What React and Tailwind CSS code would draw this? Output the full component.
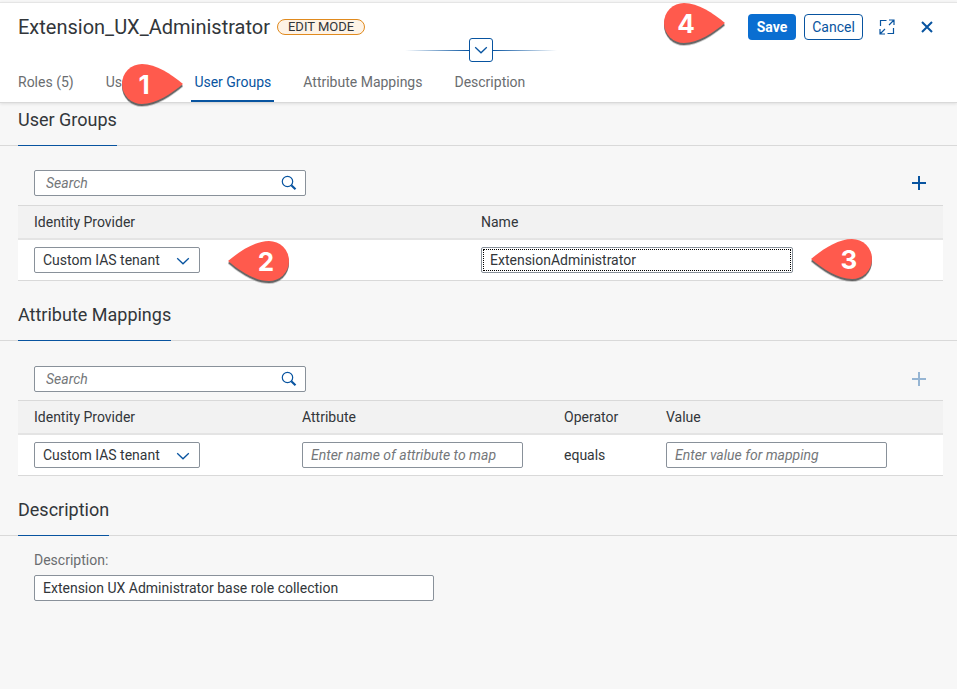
import React from "react";

const fieldBox =
  "h-[26px] rounded-[2px] border border-[#89919a] bg-white px-2 text-sm text-[#32363a] outline-none placeholder:italic placeholder:text-[#74777a]";
const headCell = "border-t border-b-2 border-t-[#d9d9d9] border-b-[#e4e4e4] bg-[#f2f2f2] px-2 text-left text-sm font-normal";
const bodyCell = "border-b border-[#d9d9d9] bg-white px-2";

function Chevron({ className }) {
  return (
    <svg className={className} width="14" height="8" viewBox="0 0 14 8" fill="none" stroke="#0854a0" strokeWidth="1.3" aria-hidden="true">
      <path d="M1.2 1.2 7 6.800 12.800 1.2" />
    </svg>
  );
}

function Pin({ number, flip, className }) {
  const body = flip
    ? "M0 21C12 11 27 1 41 1A20 20 0 0 1 41 41C27 41 12 31 0 21Z"
    : "M62 21C50 11 35 1 21 1A20 20 0 0 0 21 41C35 41 50 31 62 21Z";
  return (
    <svg className={`pointer-events-none absolute ${className}`} width="64" height="46" viewBox="0 0 64 46" aria-hidden="true">
      <path d={body} fill="#555" opacity="0.3" transform="translate(0 3)" />
      <path d={body} fill="#555" opacity="0.85" transform="translate(0 2)" />
      <path d={body} fill="#ff5a4d" />
      <text x={flip ? 38 : 23} y="31" textAnchor="middle" fill="#fff" fontSize="26" fontWeight="700" fontFamily="Inter, 'Liberation Sans', sans-serif">
        {number}
      </text>
    </svg>
  );
}

function SectionTitle({ children, first }) {
  return (
    <div className={`flex border-b border-[#d9d9d9] pl-[18px] ${first ? "pt-[5px]" : "pt-[22px]"}`}>
      <h2 className="-mb-px border-b border-[#0854a0] pb-[13px] text-lg leading-6">{children}</h2>
    </div>
  );
}

function Toolbar({ label, disabled, className }) {
  return (
    <div className={`flex items-center justify-between pr-4 pl-[34px] ${className}`}>
      <div className="flex h-[26px] w-[272px] items-center rounded-[2px] border border-[#89919a] bg-white">
        <input
          type="search"
          aria-label={label}
          placeholder="Search"
          className="min-w-0 flex-1 bg-transparent pl-[11px] text-sm outline-none placeholder:text-[#74777a] placeholder:italic"
        />
        <button type="button" aria-label="Search" className="flex h-6 w-8 items-center justify-center">
          <svg width="16" height="16" viewBox="0 0 16 16" fill="none" stroke="#0854a0" aria-hidden="true">
            <circle cx="6.5" cy="6.5" r="5.2" strokeWidth="1.2" />
            <path d="M10.3 10.3 14.5 14.2" strokeWidth="2.2" />
          </svg>
        </button>
      </div>
      <button
        type="button"
        aria-label="Add"
        disabled={disabled}
        className="flex h-[26px] items-center justify-center px-[14px] disabled:opacity-40"
      >
        <svg width="16" height="16" viewBox="0 0 16 16" stroke="#0854a0" strokeWidth="2" aria-hidden="true">
          <path d="M8 1v14M1 8h14" />
        </svg>
      </button>
    </div>
  );
}

function ProviderSelect() {
  return (
    <div className="relative w-[166px]">
      <select aria-label="Identity Provider" className={`${fieldBox} block w-full appearance-none`}>
        <option>Custom IAS tenant</option>
      </select>
      <Chevron className="pointer-events-none absolute top-[10px] right-[10px]" />
    </div>
  );
}

export default function App() {
  const tab = "px-[3px] pb-[10px] text-sm leading-5";
  return (
    <div className="relative min-h-screen bg-[#f7f7f7] pt-[2px] font-[Roboto,'Liberation_Sans',sans-serif] text-sm text-[#32363a]">
      <header className="relative border-t border-b border-t-[#e5e5e5] border-b-[#d9d9d9] bg-white shadow-[0_1px_3px_rgba(0,0,0,0.1)]">
        <div className="flex h-12 items-center pr-[14px] pl-[18px]">
          <h1 className="text-xl">Extension_UX_Administrator</h1>
          <span className="ml-[7px] flex h-4 items-center rounded-full border border-[#e08a1e] bg-[#fef3e6] px-[10px] text-[13px]">EDIT MODE</span>
          <div className="ml-auto flex items-center gap-2">
            <button type="button" className="h-[26px] w-12 rounded-[4px] bg-[#0a6ed1] text-sm font-bold text-white">
              Save
            </button>
            <button type="button" className="h-[26px] w-[59px] rounded-[4px] border border-[#0854a0] bg-white text-sm text-[#0854a0]">
              Cancel
            </button>
            <button type="button" aria-label="Full screen" className="flex h-[26px] w-8 items-center justify-center">
              <svg width="16" height="16" viewBox="0 0 16 16" fill="none" stroke="#0854a0" strokeWidth="1.2" aria-hidden="true">
                <path d="M7.500 1.500H1.500V7M8.500 14.500h6V9M10 1h5v5M15 1 10 6M6 15H1v-5M1 15 6 10" />
              </svg>
            </button>
            <button type="button" aria-label="Close" className="flex h-[26px] w-8 items-center justify-center">
              <svg width="12" height="12" viewBox="0 0 12 12" stroke="#0854a0" strokeWidth="2" aria-hidden="true">
                <path d="M1 1l10 10M11 1 1 11" />
              </svg>
            </button>
          </div>
        </div>
        <div className="absolute inset-x-0 top-[35px] flex items-center justify-center pl-1">
          <span className="h-px w-16 bg-linear-to-r from-transparent to-[#0854a0]" />
          <button type="button" aria-label="Expand header" className="flex size-6 items-center justify-center rounded-[3px] border border-[#0854a0] bg-white">
            <Chevron />
          </button>
          <span className="h-px w-16 bg-linear-to-l from-transparent to-[#0854a0]" />
        </div>
        <nav className="flex gap-[26px] pt-[21px] pl-[15px] text-[#6a6d70]">
          <a href="#roles" className={tab}>Roles (5)</a>
          <a href="#users" className={tab}>Users (1)</a>
          <a href="#groups" className="rounded-t-[2px] border-b-2 border-[#0854a0] px-[3px] pb-2 text-sm leading-5 text-[#0854a0]">User Groups</a>
          <a href="#mappings" className={tab}>Attribute Mappings</a>
          <a href="#description" className={tab}>Description</a>
        </nav>
      </header>

      <main>
        <section id="groups">
          <SectionTitle first>User Groups</SectionTitle>
          <Toolbar label="Search user groups" className="pt-6 pb-[9px]" />
          <div className="pr-[14px] pl-[18px]">
            <table className="w-full table-fixed border-separate border-spacing-0">
              <thead>
                <tr className="h-[35px]">
                  <th className={`${headCell} w-[455px] pl-4`}>Identity Provider</th>
                  <th className={headCell}>Name</th>
                </tr>
              </thead>
              <tbody>
                <tr className="h-[41px]">
                  <td className={`${bodyCell} pl-4`}><ProviderSelect /></td>
                  <td className={bodyCell}>
                    <div className="relative w-[312px]">
                      <input aria-label="Name" defaultValue="ExtensionAdministrator" className={`${fieldBox} block w-full`} />
                      <span className="pointer-events-none absolute inset-[2px] border border-dotted border-black" />
                    </div>
                  </td>
                </tr>
              </tbody>
            </table>
          </div>
        </section>

        <section id="mappings">
          <SectionTitle>Attribute Mappings</SectionTitle>
          <Toolbar label="Search attribute mappings" disabled className="pt-[25px] pb-2" />
          <div className="pr-[14px] pl-[18px]">
            <table className="w-full table-fixed border-separate border-spacing-0">
              <thead>
                <tr className="h-[35px]">
                  <th className={`${headCell} w-[276px] pl-4`}>Identity Provider</th>
                  <th className={`${headCell} w-[262px]`}>Attribute</th>
                  <th className={`${headCell} w-[102px]`}>Operator</th>
                  <th className={headCell}>Value</th>
                </tr>
              </thead>
              <tbody>
                <tr className="h-[41px]">
                  <td className={`${bodyCell} pl-4`}><ProviderSelect /></td>
                  <td className={bodyCell}>
                    <input aria-label="Attribute" placeholder="Enter name of attribute to map" className={`${fieldBox} block w-[221px]`} />
                  </td>
                  <td className={bodyCell}>equals</td>
                  <td className={bodyCell}>
                    <input aria-label="Value" placeholder="Enter value for mapping" className={`${fieldBox} block w-[221px]`} />
                  </td>
                </tr>
              </tbody>
            </table>
          </div>
        </section>

        <section id="description">
          <SectionTitle>Description</SectionTitle>
          <div className="flex flex-col items-start gap-[5px] pt-[14px] pl-[34px]">
            <label htmlFor="desc" className="leading-5 text-[#6a6d70]">Description:</label>
            <input id="desc" defaultValue="Extension UX Administrator base role collection" className={`${fieldBox} w-[400px]`} />
          </div>
        </section>
      </main>

      <Pin number="1" className="top-[63px] left-[121px]" />
      <Pin number="2" flip className="top-[240px] left-[228px]" />
      <Pin number="3" flip className="top-[238px] left-[811px]" />
      <Pin number="4" className="top-[2px] right-[230px]" />
    </div>
  );
}
